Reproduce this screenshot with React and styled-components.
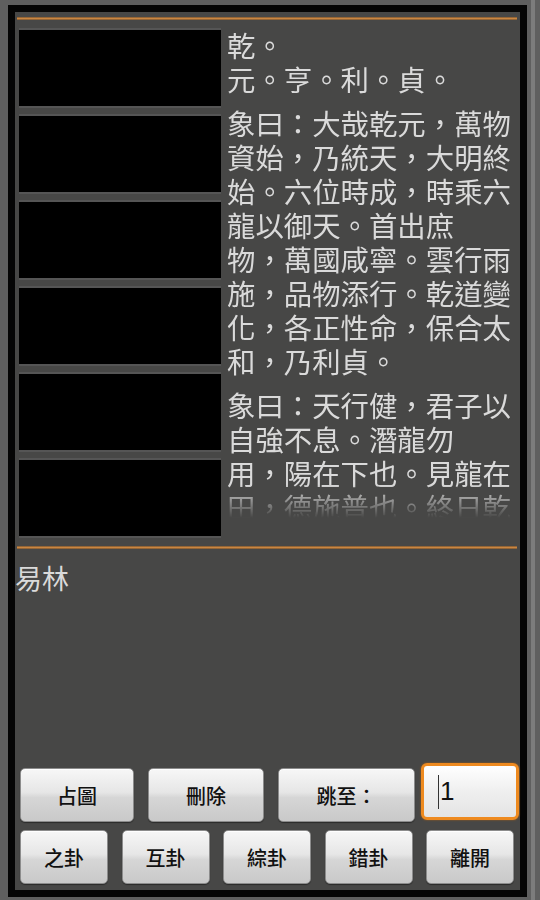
import React from 'react'
import styled, { createGlobalStyle } from 'styled-components'

const Global = createGlobalStyle`
    html, body {
        margin:0;
        padding:0;
        background:#5f5f5f;
    }
    body{
        font-family:"Noto Sans CJK TC", "Noto Sans", sans-serif;
    }
`;

const text = [
    ['乾。', '元。亨。利。貞。'],
    ['象曰：大哉乾元，萬物', '資始，乃統天，大明終', '始。六位時成，時乘六', '龍以御天。首出庶', '物，萬國咸寧。雲行雨', '施，品物添行。乾道變', '化，各正性命，保合太', '和，乃利貞。'],
    ['象曰：天行健，君子以', '自強不息。潛龍勿', '用，陽在下也。見龍在', '田，德施普也。終日乾'],
]

const App = () => {
    return (
        <>
            <Global />
            <Screen>
                <Frame>
                    <Panel>
                        <Rule />
                        <Reader>
                            <Boxes>
                                {[0, 1, 2, 3, 4, 5].map(i => <Box key={i} />)}
                            </Boxes>
                            <Scroll>
                                {text.map((para, i) => (
                                    <Para key={i}>
                                        {para.map((line, j) => <Line key={j}>{line}</Line>)}
                                    </Para>
                                ))}
                            </Scroll>
                        </Reader>
                        <Rule gap={10} />
                        <Label>易林</Label>
                        <Spacer />
                        <Row1>
                            <Button w={114}>占圖</Button>
                            <Button w={116}>刪除</Button>
                            <Button w={137}>跳至：</Button>
                            <Input><Caret />1</Input>
                        </Row1>
                        <Row2>
                            <Button>之卦</Button>
                            <Button>互卦</Button>
                            <Button>綜卦</Button>
                            <Button>錯卦</Button>
                            <Button>離開</Button>
                        </Row2>
                    </Panel>
                </Frame>
            </Screen>
        </>
    )
}

const Screen = styled.div`
    width:540px;
    height:900px;
    box-sizing:border-box;
    padding:5px 13px 3px 8px;
    background:#5f5f5f;
    position:relative;
    &::after{
        content:'';
        position:absolute;
        top:0;
        right:5px;
        width:4px;
        height:100%;
        background:#7c7c7c;
    }
`;
const Frame = styled.div`
    height:100%;
    box-sizing:border-box;
    border:7px solid #050505;
`;
const Panel = styled.div`
    height:100%;
    background:#474746;
    display:flex;
    flex-direction:column;
`;
const Rule = styled.div`
    height:3px;
    margin:${p => p.gap || 5}px 3px 0 2px;
    background:linear-gradient(#7a5530, #c98642 50%, #7a5530);
    flex-shrink:0;
`;
const Reader = styled.div`
    display:flex;
    padding:8px 0 0 4px;
    gap:6px;
`;
const Boxes = styled.div`
    display:flex;
    flex-direction:column;
    gap:10px;
    margin-top:2px;
    width:202px;
    flex-shrink:0;
`;
const Box = styled.div`
    height:76px;
    background:#000;
    box-shadow:0 -2px 0 #555, 0 2px 0 #555;
`;
const Scroll = styled.div`
    height:490px;
    overflow:hidden;
    color:#dadada;
    font-size:28.4px;
    line-height:34px;
    -webkit-mask-image:linear-gradient(to bottom, #000 calc(100% - 34px), transparent 100%);
    mask-image:linear-gradient(to bottom, #000 calc(100% - 34px), transparent 100%);
`;
const Para = styled.div`
    margin-bottom:10px;
`;
const Line = styled.div`
    white-space:nowrap;
`;
const Label = styled.div`
    color:#dadada;
    font-size:27px;
    line-height:34px;
    margin-top:12px;
`;
const Spacer = styled.div`
    flex:1;
`;
const Row1 = styled.div`
    display:flex;
    align-items:flex-start;
    padding-left:5px;
    gap:14px;
`;
const Row2 = styled.div`
    display:grid;
    grid-template-columns:repeat(5, 88px);
    column-gap:13.5px;
    padding:8px 0 6px 5px;
`;
const Button = styled.div`
    width:${p => p.w ? p.w + 'px' : 'auto'};
    height:54px;
    box-sizing:border-box;
    margin-top:${p => p.w ? '5px' : '0'};
    border-radius:5px;
    border:1px solid #8c8c8c;
    background:linear-gradient(#f7f7f7, #e6e6e6 45%, #d6d6d6 55%, #c9c9c9);
    box-shadow:0 1px 1px rgba(0,0,0,0.4), inset 0 1px 0 #fff;
    color:#111;
    font-size:20px;
    font-weight:500;
    display:flex;
    align-items:center;
    justify-content:center;
`;
const Input = styled.div`
    width:98px;
    height:57px;
    box-sizing:border-box;
    margin-left:-8px;
    border:3px solid #ee8a1f;
    border-radius:6px;
    background:linear-gradient(#ffffff, #efefef 50%, #e4e4e4);
    box-shadow:0 0 2px #b06010;
    color:#111;
    font-family:"Liberation Sans", sans-serif;
    font-size:26px;
    display:flex;
    align-items:center;
    padding-left:14px;
`;
const Caret = styled.span`
    display:inline-block;
    width:1px;
    height:34px;
    background:#333;
    margin-right:1px;
`;

export default App
